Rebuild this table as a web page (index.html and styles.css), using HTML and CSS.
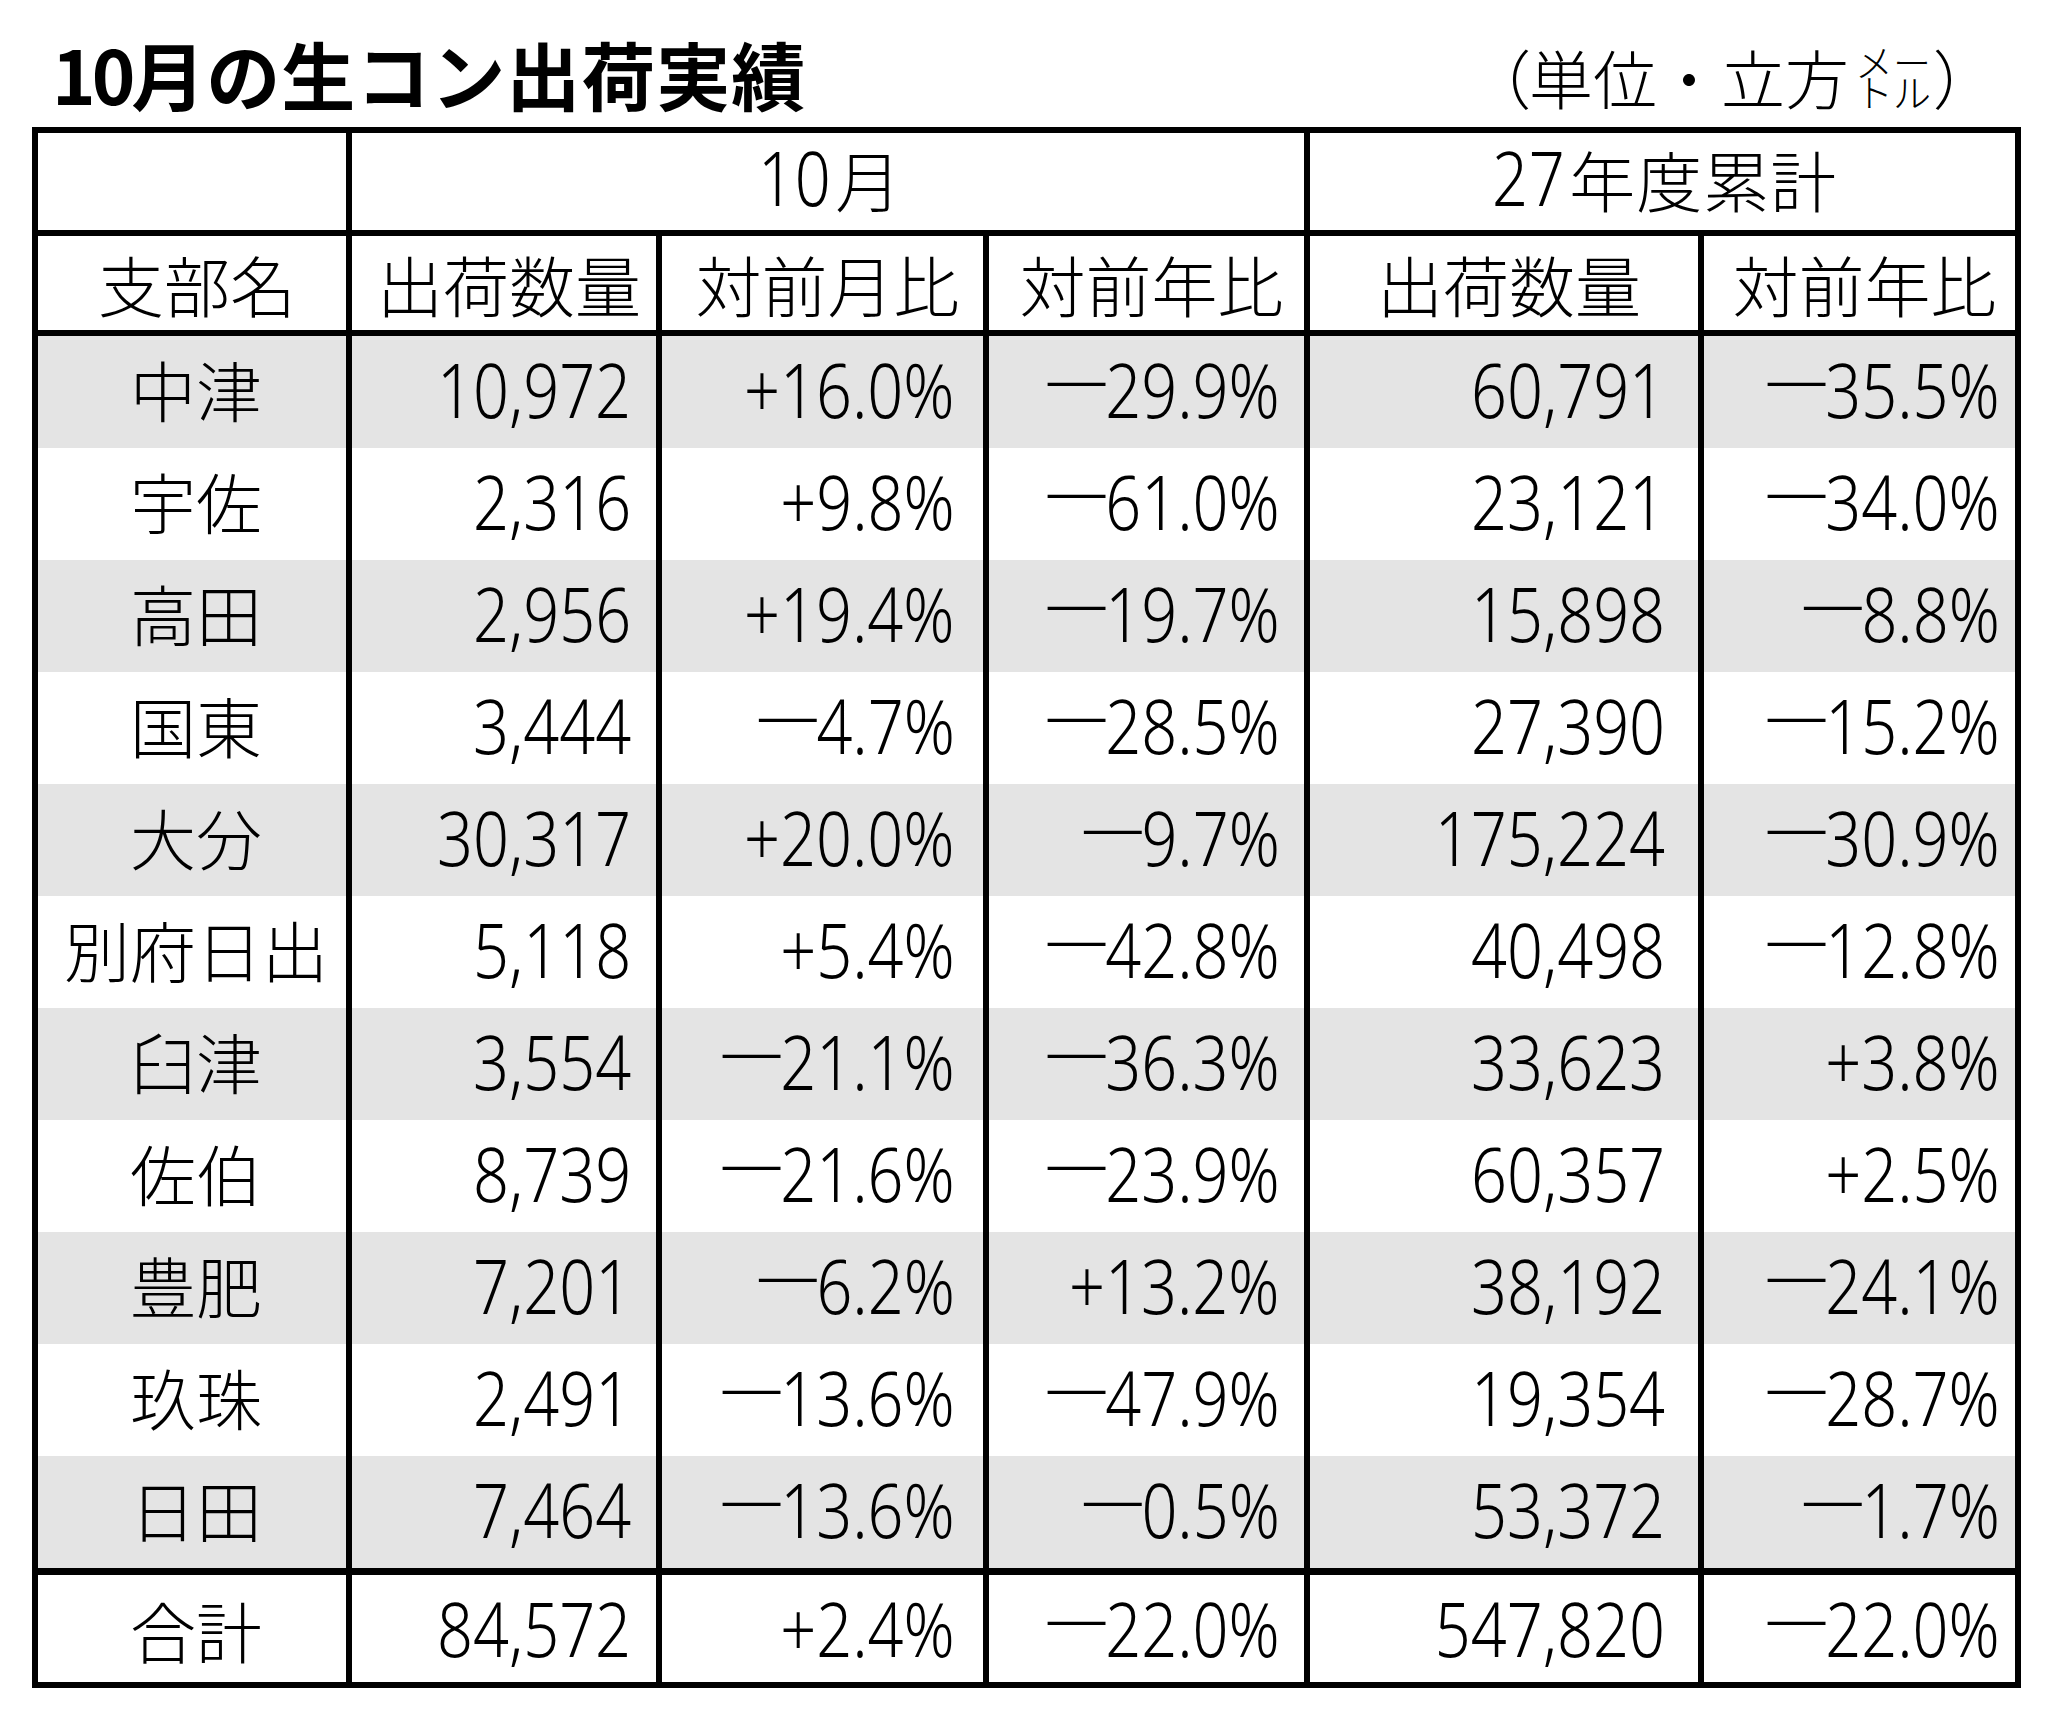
FILE: index.html
```html
<!DOCTYPE html>
<html lang="ja">
<head>
<meta charset="utf-8">
<title>10月の生コン出荷実績</title>
<link rel="stylesheet" href="styles.css">
</head>
<body>
<div class="page">
  <header class="top">
    <h1 class="title"><span class="tdig">10</span>月の生コン出荷実績</h1>
    <div class="unit"><span class="p">（</span><span>単位・立方</span><span class="split">メートル</span><span class="p">）</span></div>
  </header>
  <div class="sheet">
    <div class="hd1"></div>
    <div class="hd1 span3"><span class="d">10</span>月</div>
    <div class="hd1 span2"><span class="d">27</span>年度累計</div>
    <div class="rule"></div>
    <div class="hd2">支部名</div>
    <div class="hd2">出荷数量</div>
    <div class="hd2">対前月比</div>
    <div class="hd2">対前年比</div>
    <div class="hd2">出荷数量</div>
    <div class="hd2">対前年比</div>
    <div class="rule"></div>

    <div class="row g"><div class="name">中津</div><div class="v c2"><span class="n">10,972</span></div><div class="v c3"><span class="n">+16.0%</span></div><div class="v c4"><span class="n"><span class="m">—</span>29.9%</span></div><div class="v c5"><span class="n">60,791</span></div><div class="v c6"><span class="n"><span class="m">—</span>35.5%</span></div></div>
    <div class="row"><div class="name">宇佐</div><div class="v c2"><span class="n">2,316</span></div><div class="v c3"><span class="n">+9.8%</span></div><div class="v c4"><span class="n"><span class="m">—</span>61.0%</span></div><div class="v c5"><span class="n">23,121</span></div><div class="v c6"><span class="n"><span class="m">—</span>34.0%</span></div></div>
    <div class="row g"><div class="name">高田</div><div class="v c2"><span class="n">2,956</span></div><div class="v c3"><span class="n">+19.4%</span></div><div class="v c4"><span class="n"><span class="m">—</span>19.7%</span></div><div class="v c5"><span class="n">15,898</span></div><div class="v c6"><span class="n"><span class="m">—</span>8.8%</span></div></div>
    <div class="row"><div class="name">国東</div><div class="v c2"><span class="n">3,444</span></div><div class="v c3"><span class="n"><span class="m">—</span>4.7%</span></div><div class="v c4"><span class="n"><span class="m">—</span>28.5%</span></div><div class="v c5"><span class="n">27,390</span></div><div class="v c6"><span class="n"><span class="m">—</span>15.2%</span></div></div>
    <div class="row g"><div class="name">大分</div><div class="v c2"><span class="n">30,317</span></div><div class="v c3"><span class="n">+20.0%</span></div><div class="v c4"><span class="n"><span class="m">—</span>9.7%</span></div><div class="v c5"><span class="n">175,224</span></div><div class="v c6"><span class="n"><span class="m">—</span>30.9%</span></div></div>
    <div class="row"><div class="name">別府日出</div><div class="v c2"><span class="n">5,118</span></div><div class="v c3"><span class="n">+5.4%</span></div><div class="v c4"><span class="n"><span class="m">—</span>42.8%</span></div><div class="v c5"><span class="n">40,498</span></div><div class="v c6"><span class="n"><span class="m">—</span>12.8%</span></div></div>
    <div class="row g"><div class="name">臼津</div><div class="v c2"><span class="n">3,554</span></div><div class="v c3"><span class="n"><span class="m">—</span>21.1%</span></div><div class="v c4"><span class="n"><span class="m">—</span>36.3%</span></div><div class="v c5"><span class="n">33,623</span></div><div class="v c6"><span class="n">+3.8%</span></div></div>
    <div class="row"><div class="name">佐伯</div><div class="v c2"><span class="n">8,739</span></div><div class="v c3"><span class="n"><span class="m">—</span>21.6%</span></div><div class="v c4"><span class="n"><span class="m">—</span>23.9%</span></div><div class="v c5"><span class="n">60,357</span></div><div class="v c6"><span class="n">+2.5%</span></div></div>
    <div class="row g"><div class="name">豊肥</div><div class="v c2"><span class="n">7,201</span></div><div class="v c3"><span class="n"><span class="m">—</span>6.2%</span></div><div class="v c4"><span class="n">+13.2%</span></div><div class="v c5"><span class="n">38,192</span></div><div class="v c6"><span class="n"><span class="m">—</span>24.1%</span></div></div>
    <div class="row"><div class="name">玖珠</div><div class="v c2"><span class="n">2,491</span></div><div class="v c3"><span class="n"><span class="m">—</span>13.6%</span></div><div class="v c4"><span class="n"><span class="m">—</span>47.9%</span></div><div class="v c5"><span class="n">19,354</span></div><div class="v c6"><span class="n"><span class="m">—</span>28.7%</span></div></div>
    <div class="row g"><div class="name">日田</div><div class="v c2"><span class="n">7,464</span></div><div class="v c3"><span class="n"><span class="m">—</span>13.6%</span></div><div class="v c4"><span class="n"><span class="m">—</span>0.5%</span></div><div class="v c5"><span class="n">53,372</span></div><div class="v c6"><span class="n"><span class="m">—</span>1.7%</span></div></div>

    <div class="rule thick"></div>
    <div class="row total"><div class="name">合計</div><div class="v c2"><span class="n">84,572</span></div><div class="v c3"><span class="n">+2.4%</span></div><div class="v c4"><span class="n"><span class="m">—</span>22.0%</span></div><div class="v c5"><span class="n">547,820</span></div><div class="v c6"><span class="n"><span class="m">—</span>22.0%</span></div></div>
  </div>
</div>
</body>
</html>
```

FILE: styles.css
```css
html, body {
  margin: 0;
  background: #fff;
}
body {
  font-family: "Noto Sans CJK JP", sans-serif;
  color: #000;
}
*, *::before, *::after {
  box-sizing: border-box;
}
.page {
  width: 2053px;
  padding: 0 32px;
}
.top {
  height: 127px;
  display: flex;
  justify-content: space-between;
  align-items: flex-end;
  padding: 0 54px 17px 20px;
}
.title {
  margin: 0;
  font-size: 74px;
  font-weight: 700;
  line-height: 1;
  letter-spacing: 1px;
  white-space: nowrap;
}
.title .tdig {
  letter-spacing: -4px;
}
.unit {
  display: flex;
  align-items: flex-end;
  font-size: 64px;
  font-weight: 300;
  line-height: 1;
  white-space: nowrap;
  margin-bottom: 2px;
}
.unit .p {
  font-feature-settings: "palt";
}
.split {
  width: 2em;
  font-size: 38px;
  line-height: 30px;
  white-space: normal;
  line-break: anywhere;
  margin: 0 4px 2px 6px;
}

.sheet {
  display: grid;
  grid-template-columns: 308px 304px 321px 315px 388px 311px;
  column-gap: 6px;
  border: 6px solid #000;
  background: #000;
  font-weight: 300;
}
.sheet > div,
.row > div {
  background: #fff;
  display: flex;
  align-items: center;
}
.sheet > .rule {
  grid-column: 1 / -1;
  height: 6px;
  background: #000;
}
.sheet > .rule.thick {
  height: 7px;
}
.hd1 {
  height: 97px;
  justify-content: center;
  font-size: 66px;
  line-height: 1;
  padding-bottom: 8px;
  letter-spacing: 1px;
}
.span3 { grid-column: span 3; }
.span2 { grid-column: span 2; }
.hd2 {
  height: 94px;
  justify-content: center;
  padding-left: 10px;
  font-size: 66px;
  line-height: 1;
}
.sheet > .row {
  display: contents;
}
.row > div {
  height: 112px;
}
.row.g > div {
  background: #e4e4e4;
}
.name {
  justify-content: center;
  padding-left: 8px;
  padding-bottom: 8px;
  font-size: 66px;
  line-height: 1;
}
.v {
  justify-content: flex-end;
  padding-bottom: 6px;
}
.row.total > div {
  height: 107px;
  padding-bottom: 0;
}
.c2 { padding-right: 25px; }
.c3 { padding-right: 28px; }
.c4 { padding-right: 24px; }
.c5 { padding-right: 33px; }
.c6 { padding-right: 15px; }

.n,
.d {
  font-family: "Noto Sans", Lato, Roboto, sans-serif;
  font-weight: 300;
  font-size: 75px;
  line-height: 1;
  display: inline-block;
  white-space: nowrap;
  transform: scaleX(0.84);
}
.n {
  transform-origin: right center;
}
.d {
  transform-origin: center;
  margin: 0 -3px;
}
.m {
  font-family: "Liberation Serif", serif;
  font-size: 68px;
  line-height: 0;
  vertical-align: 18px;
}
```
